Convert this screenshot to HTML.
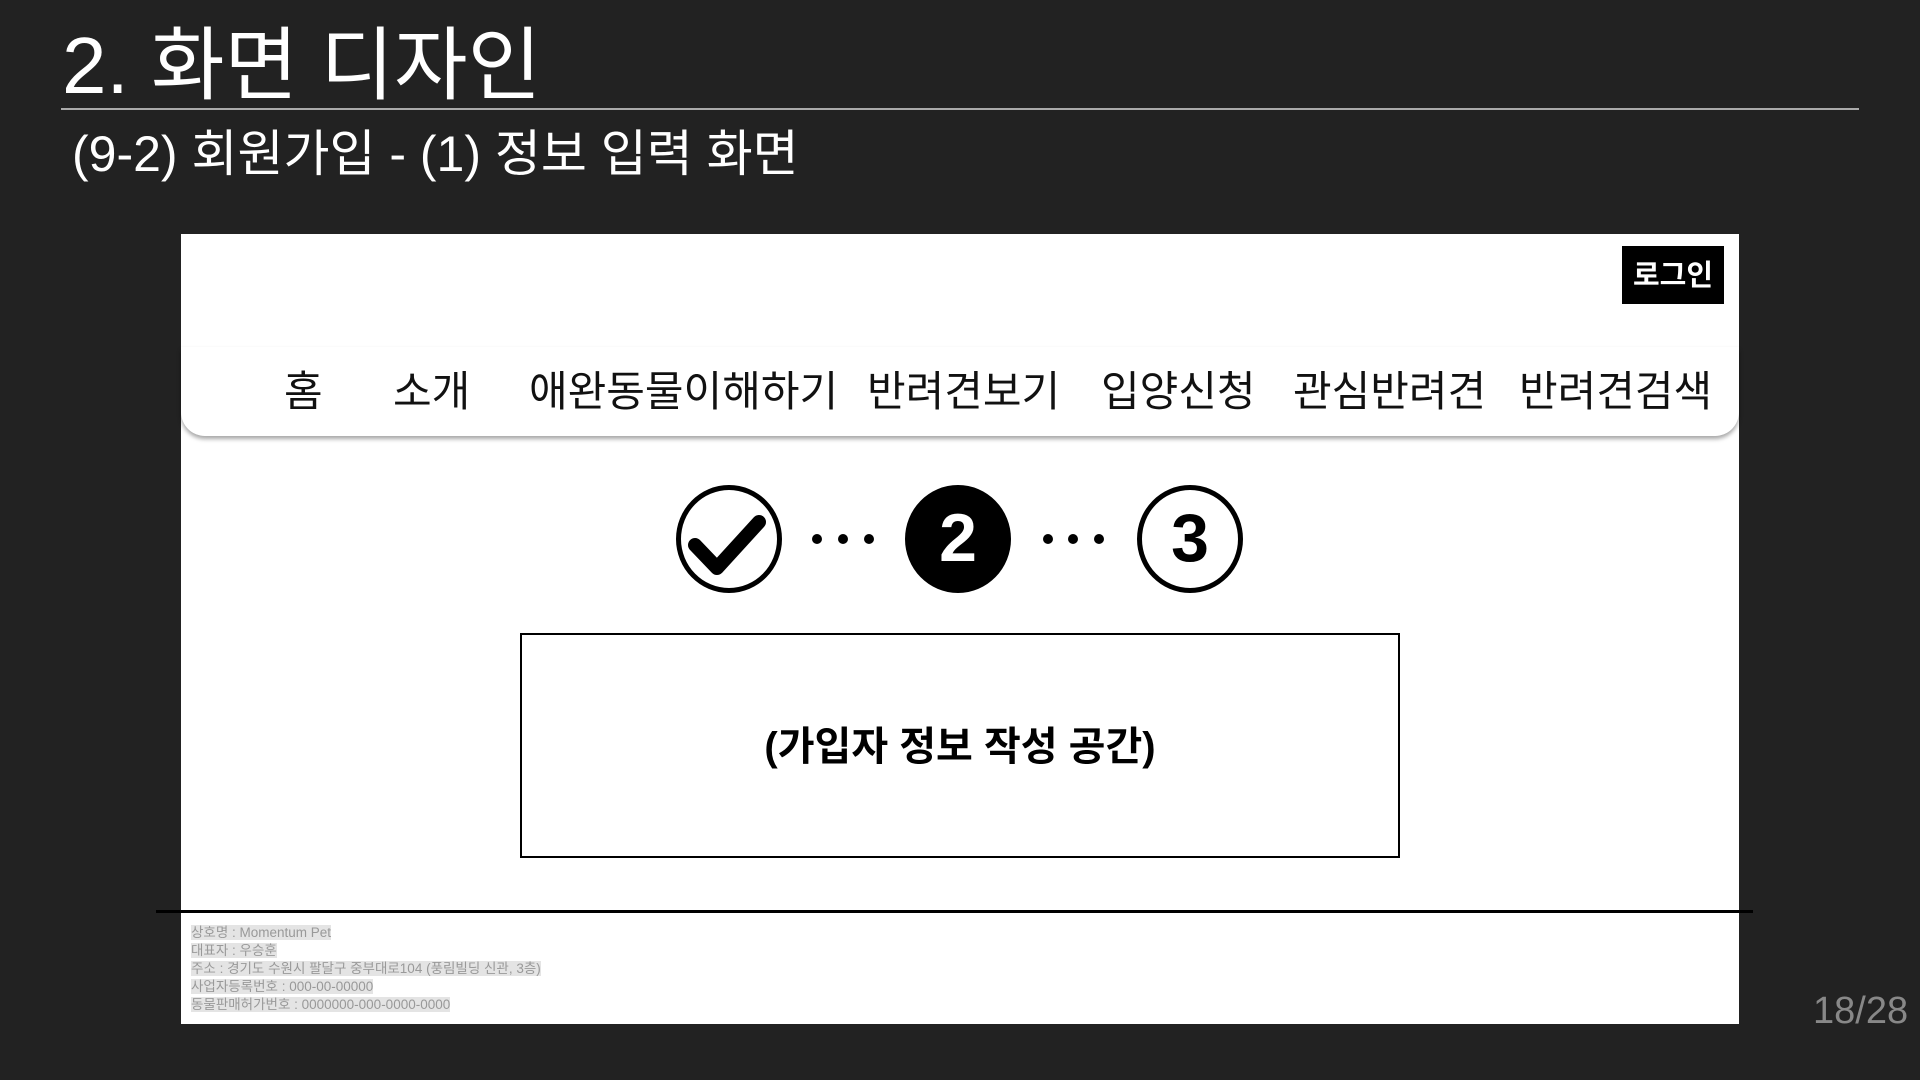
<!DOCTYPE html>
<html><head><meta charset="utf-8"><style>
*{margin:0;padding:0;box-sizing:border-box}
body{width:1920px;height:1080px;background:#222;position:relative;overflow:hidden;font-family:"Liberation Sans","Noto Sans CJK KR",sans-serif}
.a{position:absolute}
.title{left:62px;top:16px;font-size:80px;color:#fff;font-weight:400;line-height:100px}
.rule{left:61px;top:108px;width:1798px;height:2px;background:#aaa}
.sub{left:72px;top:124px;font-size:50px;color:#fff;line-height:60px}
.panel{left:181px;top:234px;width:1558px;height:790px;background:#fff}
.login{left:1622px;top:246px;width:102px;height:58px;background:#000;color:#fff;font-weight:700;font-size:29px;text-align:center;line-height:60px}
.nav{left:181px;top:347px;width:1558px;height:89px;background:#fff;border-radius:0 0 24px 24px;box-shadow:0 3px 4px rgba(0,0,0,.35)}
.nav span{position:absolute;top:20px;font-size:42px;color:#111;line-height:50px}
.c{width:106px;height:108px;border-radius:50%;border:5px solid #000;top:485px;text-align:center;font-weight:700;font-size:68px;line-height:96px}
.dot{width:10px;height:10px;border-radius:50%;background:#000;top:534px}
.box{left:520px;top:633px;width:880px;height:225px;border:2px solid #000;text-align:center;font-weight:700;font-size:40px;line-height:225px;color:#000}
.line{left:156px;top:910px;width:1597px;height:3px;background:#000}
.foot{left:191px;top:924px;font-size:13.5px;color:#999;line-height:18px}
.foot div span{background:#e4e4e4}
.pg{left:1813px;top:990px;font-size:38px;color:#888}
</style></head><body>
<div class="a title">2. 화면 디자인</div>
<div class="a rule"></div>
<div class="a sub">(9-2) 회원가입 - (1) 정보 입력 화면</div>
<div class="a panel"></div>
<div class="a login">로그인</div>
<div class="a nav">
<span style="left:103px">홈</span>
<span style="left:212px">소개</span>
<span style="left:348px">애완동물이해하기</span>
<span style="left:686px">반려견보기</span>
<span style="left:920px">입양신청</span>
<span style="left:1112px">관심반려견</span>
<span style="left:1338px">반려견검색</span>
</div>
<div class="a c" style="left:676px"><svg width="96" height="98" viewBox="0 0 96 98"><path d="M14 55 L36 78 L78 32" fill="none" stroke="#000" stroke-width="14" stroke-linecap="round" stroke-linejoin="round"/></svg></div>
<div class="a dot" style="left:812px"></div><div class="a dot" style="left:838px"></div><div class="a dot" style="left:864px"></div>
<div class="a c" style="left:905px;background:#000;color:#fff">2</div>
<div class="a dot" style="left:1043px"></div><div class="a dot" style="left:1068px"></div><div class="a dot" style="left:1094px"></div>
<div class="a c" style="left:1137px">3</div>
<div class="a box">(가입자 정보 작성 공간)</div>
<div class="a line"></div>
<div class="a foot">
<div><span>상호명 : Momentum Pet</span></div>
<div><span>대표자 : 우승훈</span></div>
<div><span>주소 : 경기도 수원시 팔달구 중부대로104 (풍림빌딩 신관, 3층)</span></div>
<div><span>사업자등록번호 : 000-00-00000</span></div>
<div><span>동물판매허가번호 : 0000000-000-0000-0000</span></div>
</div>
<div class="a pg">18/28</div>
</body></html>
